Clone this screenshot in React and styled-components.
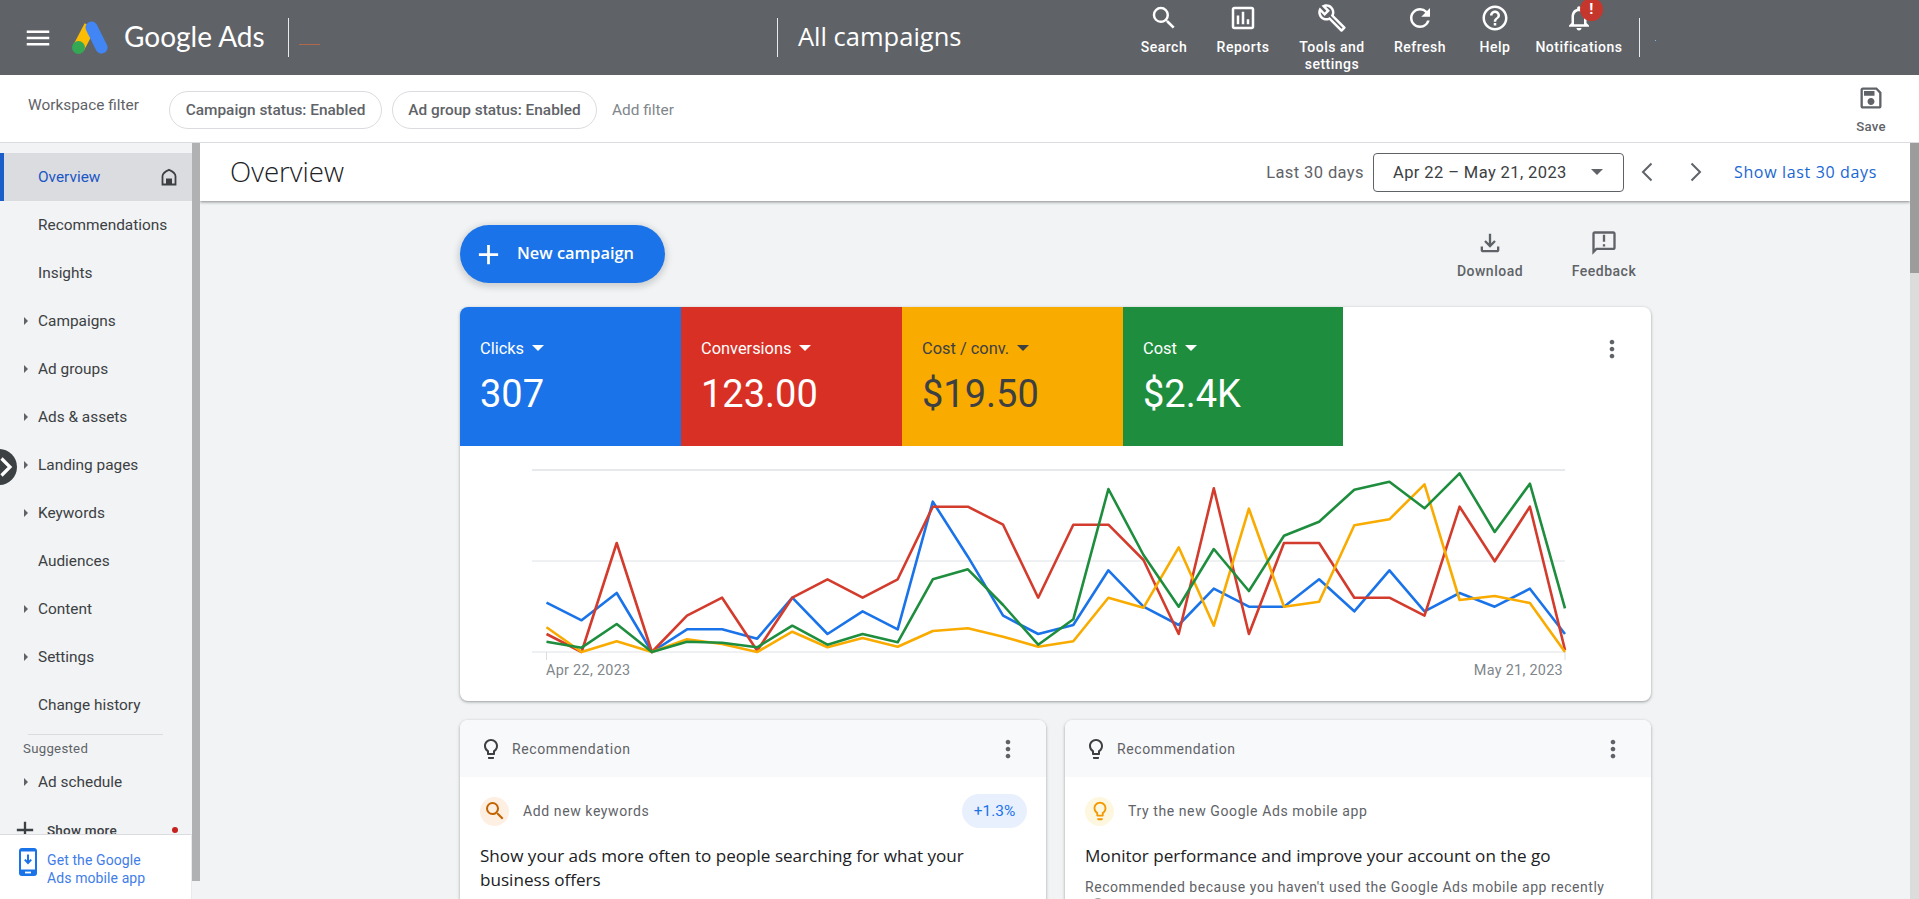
import React from 'react';
import styled, { createGlobalStyle } from 'styled-components';

const GlobalStyle = createGlobalStyle`
  html, body {
    margin: 0;
    height: 100%;
    overflow: hidden;
    background: #f1f3f4;
    font-family: Roboto, 'Liberation Sans', sans-serif;
  }
  * { box-sizing: border-box; }
`;

const DISPLAY = "'Open Sans', Roboto, sans-serif";

const ICONS = {
  menu: 'M3 18h18v-2H3v2zm0-5h18v-2H3v2zm0-7v2h18V6H3z',
  search: 'M15.5 14h-.79l-.28-.27A6.471 6.471 0 0 0 16 9.5 6.5 6.5 0 1 0 9.5 16c1.61 0 3.09-.59 4.23-1.57l.27.28v.79l5 4.99L20.49 19l-4.99-5zm-6 0C7.01 14 5 11.99 5 9.5S7.01 5 9.5 5 14 7.01 14 9.5 11.99 14 9.5 14z',
  reports: 'M19 3H5c-1.1 0-2 .9-2 2v14c0 1.1.9 2 2 2h14c1.1 0 2-.9 2-2V5c0-1.1-.9-2-2-2zm0 16H5V5h14v14zM7 10h2v7H7zm4-3h2v10h-2zm4 6h2v4h-2z',
  tools: 'M22.61 18.99l-9.08-9.08c.93-2.34.45-5.1-1.44-7C9.79.61 6.21.4 3.66 2.25L7.5 6.1 6.08 7.5 2.25 3.69C.39 6.23.6 9.82 2.9 12.11c1.86 1.86 4.57 2.35 6.89 1.48l9.11 9.11c.39.39 1.02.39 1.41 0l2.3-2.3c.4-.38.4-1.01 0-1.41zm-3 1.6l-9.46-9.46c-.61.45-1.29.72-2 .82-1.36.2-2.79-.21-3.83-1.25C3.37 9.76 2.93 8.5 3 7.26l3.09 3.09 4.24-4.24-3.09-3.09c1.24-.07 2.49.37 3.44 1.31 1.08 1.08 1.49 2.57 1.24 3.96-.12.71-.42 1.37-.88 1.96l9.45 9.45-.88.89z',
  refresh: 'M17.65 6.35A7.958 7.958 0 0 0 12 4c-4.42 0-7.99 3.58-7.99 8s3.57 8 7.99 8c3.73 0 6.84-2.55 7.73-6h-2.08A5.99 5.99 0 0 1 12 18c-3.31 0-6-2.69-6-6s2.69-6 6-6c1.66 0 3.14.69 4.22 1.78L13 11h7V4l-2.35 2.35z',
  help: 'M11 18h2v-2h-2v2zm1-16C6.48 2 2 6.48 2 12s4.48 10 10 10 10-4.48 10-10S17.52 2 12 2zm0 18c-4.41 0-8-3.59-8-8s3.59-8 8-8 8 3.59 8 8-3.59 8-8 8zm0-14c-2.21 0-4 1.79-4 4h2c0-1.1.9-2 2-2s2 .9 2 2c0 2-3 1.75-3 5h2c0-2.25 3-2.5 3-5 0-2.21-1.79-4-4-4z',
  bell: 'M12 22c1.1 0 2-.9 2-2h-4c0 1.1.9 2 2 2zm6-6v-5c0-3.07-1.63-5.64-4.5-6.32V4c0-.83-.67-1.5-1.5-1.5s-1.5.67-1.5 1.5v.68C7.64 5.36 6 7.92 6 11v5l-2 2v1h16v-1l-2-2zm-2 1H8v-6c0-2.48 1.51-4.5 4-4.5s4 2.02 4 4.5v6z',
  save: 'M17 3H5c-1.11 0-2 .9-2 2v14c0 1.1.89 2 2 2h14c1.1 0 2-.9 2-2V7l-4-4zm2 16H5V5h11.17L19 7.83V19zm-7-7c-1.66 0-3 1.34-3 3s1.34 3 3 3 3-1.34 3-3-1.34-3-3-3zM6 6h9v4H6z',
  download: 'M18 15v3H6v-3H4v3c0 1.1.9 2 2 2h12c1.1 0 2-.9 2-2v-3h-2zm-1-4l-1.41-1.41L13 12.17V4h-2v8.17L8.41 9.59 7 11l5 5 5-5z',
  feedback: 'M20 2H4c-1.1 0-2 .9-2 2v18l4-4h14c1.1 0 2-.9 2-2V4c0-1.1-.9-2-2-2zm0 14H5.17L4 17.17V4h16v12zM11 5h2v6h-2zm0 8h2v2h-2z',
  bulb: 'M9 21c0 .55.45 1 1 1h4c.55 0 1-.45 1-1v-1H9v1zm3-19C8.14 2 5 5.14 5 9c0 2.38 1.19 4.47 3 5.74V17c0 .55.45 1 1 1h6c.55 0 1-.45 1-1v-2.26c1.81-1.27 3-3.36 3-5.74 0-3.86-3.14-7-7-7zm2.85 11.1l-.85.6V16h-4v-2.3l-.85-.6A4.997 4.997 0 0 1 7 9c0-2.76 2.24-5 5-5s5 2.24 5 5c0 1.63-.8 3.16-2.15 4.1z',
  more: 'M12 8c1.1 0 2-.9 2-2s-.9-2-2-2-2 .9-2 2 .9 2 2 2zm0 2c-1.1 0-2 .9-2 2s.9 2 2 2 2-.9 2-2-.9-2-2-2zm0 6c-1.1 0-2 .9-2 2s.9 2 2 2 2-.9 2-2-.9-2-2-2z',
  plus: 'M19 13h-6v6h-2v-6H5v-2h6V5h2v6h6v2z',
  left: 'M15.5 3.5L7 12l8.5 8.5',
  right: 'M8.5 3.5L17 12l-8.5 8.5',
};

const Icon = ({ name, size = 24, color = 'currentColor', line = 0 }) => (
  <svg width={size} height={size} viewBox="0 0 24 24" style={{ display: 'block', flex: 'none' }}>
    {line ? (
      <path d={ICONS[name]} fill="none" stroke={color} strokeWidth={line} />
    ) : (
      <path d={ICONS[name]} fill={color} />
    )}
  </svg>
);

const Page = styled.div`
  height: 899px;
  display: flex;
  flex-direction: column;
  overflow: hidden;
`;

/* top bar */
const TopBar = styled.header`
  height: 75px;
  flex: none;
  background: #5f6368;
  color: #fff;
  display: flex;
  align-items: center;
`;
const MenuButton = styled.div`
  width: 30px;
  margin-left: 23px;
  color: #fff;
`;
const Logo = styled.svg`
  margin-left: 19px;
  flex: none;
`;
const Wordmark = styled.div`
  margin: -3px 0 0 16px;
  width: 164px;
  font-family: Lato, sans-serif;
  font-size: 28px;
`;
const Rule = styled.div`
  width: 1px;
  height: 39px;
  margin: -1px 0 0 ${(p) => p.$ml || 0}px;
  background: #e8eaed;
  flex: none;
`;
const AccountDash = styled.div`
  width: 21px;
  height: 1px;
  margin: 13px 0 0 10px;
  background: #b0694d;
  flex: none;
`;
const ScopeTitle = styled.div`
  margin: -1px 0 0 457px;
  padding-left: 20px;
  height: 39px;
  width: 348px;
  border-left: 1px solid #e8eaed;
  font-family: ${DISPLAY};
  font-size: 25.5px;
  line-height: 36px;
  white-space: nowrap;
`;
const TopActions = styled.div`
  display: flex;
  align-items: flex-start;
  height: 75px;
`;
const TopAction = styled.div`
  width: ${(p) => p.$w}px;
  display: flex;
  flex-direction: column;
  align-items: center;
  padding-top: 3px;
  position: relative;
  font-size: 14px;
  font-weight: 500;
  letter-spacing: 0.5px;
  line-height: 17px;
  text-align: center;
`;
const TopLabel = styled.div`
  margin-top: 6px;
  white-space: nowrap;
`;
const Badge = styled.div`
  position: absolute;
  top: -2px;
  left: 49px;
  width: 23px;
  height: 23px;
  border-radius: 50%;
  background: #c5372c;
  font-size: 15px;
  font-weight: 700;
  line-height: 22px;
  color: #fff;
`;
const TinyDot = styled.div`
  width: 1px;
  height: 1px;
  margin: 6px 0 0 15px;
  background: #8ab4f8;
`;

/* filter bar */
const FilterBar = styled.div`
  height: 68px;
  flex: none;
  background: #fff;
  border-bottom: 1px solid #dadce0;
  display: flex;
  align-items: center;
  padding: 0 0 0 28px;
`;
const FilterLabel = styled.div`
  width: 141px;
  margin-top: -8px;
  font-size: 15.4px;
  color: #5f6368;
`;
const Chip = styled.div`
  height: 38px;
  width: ${(p) => p.$w}px;
  margin: 2px 10px 0 0;
  border: 1px solid #dadce0;
  border-radius: 19px;
  display: flex;
  align-items: center;
  justify-content: center;
  font-size: 15.4px;
  font-weight: 500;
  color: #5f6368;
  white-space: nowrap;
`;
const AddFilter = styled.div`
  margin: 2px 0 0 5px;
  font-size: 15.4px;
  color: #80868b;
`;
const SaveButton = styled.div`
  margin-left: auto;
  width: 96px;
  display: flex;
  flex-direction: column;
  align-items: center;
  color: #5f6368;
  font-size: 13.2px;
  font-weight: 500;
  letter-spacing: 0.3px;
  gap: 7px;
`;

/* body */
const Body = styled.div`
  flex: 1;
  min-height: 0;
  display: flex;
`;
const Sidebar = styled.aside`
  width: 192px;
  flex: none;
  display: flex;
  flex-direction: column;
  position: relative;
`;
const NavList = styled.nav`
  flex: 1;
  min-height: 0;
  overflow: hidden;
  padding-top: 10px;
  background: #f1f3f4;
`;
const NavRow = styled.div`
  height: 48px;
  display: flex;
  align-items: center;
  padding-left: 24px;
  padding-right: 14px;
  font-size: 15.4px;
  color: ${(p) => (p.$active ? '#1a56c4' : '#3c4043')};
  background: ${(p) => (p.$active ? '#dadce0' : 'transparent')};
  box-shadow: ${(p) => (p.$active ? 'inset 4px 0 0 #1a5fc9' : 'none')};
  white-space: nowrap;
`;
const Caret = styled.span`
  width: 14px;
  flex: none;
  &::before {
    content: '';
    display: ${(p) => (p.$show ? 'block' : 'none')};
    width: 0;
    height: 0;
    border-left: 4px solid #5f6368;
    border-top: 4px solid transparent;
    border-bottom: 4px solid transparent;
  }
`;
const HomeMark = styled.svg`
  margin-left: auto;
`;
const NavDivider = styled.div`
  height: 1px;
  margin: 5px 29px 0 28px;
  background: #dadce0;
`;
const NavHeading = styled.div`
  height: 23px;
  padding-left: 23px;
  line-height: 27px;
  font-size: 13.2px;
  letter-spacing: 0.3px;
  color: #5f6368;
`;
const ShowMore = styled.div`
  height: 48px;
  display: flex;
  align-items: center;
  padding-left: 11px;
  font-size: 13.5px;
  font-weight: 500;
  color: #3c4043;
  letter-spacing: 0.2px;
`;
const ShowMoreLabel = styled.span`
  margin-left: 8px;
`;
const RedDot = styled.span`
  width: 6px;
  height: 6px;
  margin-left: 55px;
  border-radius: 50%;
  background: #c5221f;
`;
const MobileLink = styled.div`
  height: 65px;
  flex: none;
  background: #fff;
  border-top: 1px solid #dadce0;
  border-right: 1px solid #e8eaed;
  display: flex;
  padding: 16px 0 0 19px;
  gap: 10px;
  font-size: 14px;
  line-height: 18px;
  letter-spacing: 0.1px;
  color: #3f7de8;
`;
const CollapseButton = styled.div`
  position: absolute;
  left: -19px;
  top: 306px;
  width: 36px;
  height: 36px;
  border-radius: 50%;
  background: #3c4043;
  color: #fff;
  display: flex;
  align-items: center;
  justify-content: flex-end;
`;
const SideScroll = styled.div`
  width: 8px;
  flex: none;
  height: 738px;
  background: #b0b1b3;
`;
const Main = styled.main`
  flex: 1;
  min-width: 0;
  display: flex;
  flex-direction: column;
  overflow: hidden;
`;
const TitleBar = styled.div`
  height: 58px;
  flex: none;
  background: #fff;
  box-shadow: 0 1px 3px rgba(60, 64, 67, 0.6);
  display: flex;
  align-items: center;
  padding-left: 30px;
  position: relative;
`;
const PageTitle = styled.h1`
  margin: -2px 0 0;
  font-family: ${DISPLAY};
  font-size: 27.7px;
  font-weight: 300;
  color: #202124;
`;
const DateControls = styled.div`
  margin-left: auto;
  display: flex;
  align-items: center;
  padding-right: 33px;
  font-size: 16.5px;
  letter-spacing: 0.4px;
  color: #5f6368;
`;
const DateBox = styled.div`
  width: 251px;
  height: 39px;
  margin: 0 12px 0 9px;
  padding: 0 20px 0 19px;
  border: 1px solid #5f6368;
  border-radius: 4px;
  display: flex;
  align-items: center;
  justify-content: space-between;
  color: #3c4043;
  white-space: nowrap;
`;
const DownCaret = styled.span`
  width: 0;
  height: 0;
  border-left: ${(p) => p.$s || 6}px solid transparent;
  border-right: ${(p) => p.$s || 6}px solid transparent;
  border-top: ${(p) => p.$s || 6}px solid ${(p) => p.$c || '#5f6368'};
`;
const ArrowButton = styled.div`
  width: 24px;
  margin-right: ${(p) => p.$gap}px;
  color: #5f6368;
`;
const ShowLast = styled.div`
  font-family: ${DISPLAY};
  font-weight: 500;
  font-size: 16px;
  letter-spacing: 0.65px;
  color: #1967d2;
  white-space: nowrap;
`;
const Scroller = styled.div`
  flex: 1;
  min-height: 0;
  overflow: hidden;
`;
const Column = styled.div`
  width: 1191px;
  margin-left: 260px;
`;
const ActionRow = styled.div`
  height: 106px;
  padding-top: 24px;
  display: flex;
  align-items: flex-start;
`;
const NewCampaign = styled.div`
  width: 205px;
  height: 58px;
  border-radius: 29px;
  background: #1a73e8;
  color: #fff;
  display: flex;
  align-items: center;
  padding-left: 12px;
  gap: 12px;
  font-family: ${DISPLAY};
  font-size: 16.4px;
  font-weight: 600;
  box-shadow: 0 2px 6px 2px rgba(60, 64, 67, 0.2);
  span {
    margin-top: -4px;
  }
`;
const ToolButton = styled.div`
  width: ${(p) => p.$w}px;
  margin-left: ${(p) => p.$ml || 0}px;
  display: flex;
  flex-direction: column;
  align-items: center;
  gap: 6px;
  padding-top: 4px;
  font-size: 14px;
  font-weight: 500;
  letter-spacing: 0.5px;
  color: #5f6368;
`;
const Card = styled.section`
  background: #fff;
  border-radius: 8px;
  overflow: hidden;
  box-shadow: 0 1px 2px rgba(60, 64, 67, 0.3), 0 1px 3px 1px rgba(60, 64, 67, 0.15);
`;
const TileRow = styled.div`
  display: flex;
  height: 139px;
`;
const Tile = styled.div`
  width: ${(p) => p.$w}px;
  padding: 31px 0 0 20px;
  background: ${(p) => p.$bg};
  color: ${(p) => p.$fg};
`;
const TileLabel = styled.div`
  display: flex;
  align-items: center;
  gap: 8px;
  height: 20px;
  font-size: 16.4px;
`;
const TileValue = styled.div`
  margin-top: 10px;
  font-size: 38px;
  line-height: 52px;
`;
const CardMenu = styled.div`
  margin-left: auto;
  padding: ${(p) => p.$top}px ${(p) => p.$right}px 0 0;
  color: #5f6368;
`;
const DateAxis = styled.div`
  display: flex;
  justify-content: space-between;
  height: 39px;
  padding: 0 88px 0 86px;
  font-size: 14.4px;
  letter-spacing: 0.3px;
  color: #80868b;
`;
const RecGrid = styled.div`
  display: grid;
  grid-template-columns: 586px 586px;
  gap: 19px;
  margin-top: 19px;
`;
const RecHead = styled.div`
  height: 57px;
  display: flex;
  align-items: center;
  padding-left: 19px;
  gap: 9px;
  background: #f8f9fa;
  font-size: 14px;
  letter-spacing: 0.6px;
  color: #5f6368;
`;
const RecBulb = styled.div`
  color: #3c4043;
`;
const RecBody = styled.div`
  min-height: 300px;
  padding: 17px 20px 0;
`;
const RecTop = styled.div`
  display: flex;
  align-items: center;
  height: 34px;
  font-size: 14px;
  letter-spacing: 0.6px;
  color: #5f6368;
  gap: 14px;
`;
const RecBadge = styled.div`
  width: 29px;
  height: 29px;
  border-radius: 50%;
  flex: none;
  background: ${(p) => p.$bg};
  display: flex;
  align-items: center;
  justify-content: center;
`;
const Uplift = styled.div`
  margin-left: auto;
  margin-right: -1px;
  width: 65px;
  height: 34px;
  border-radius: 17px;
  background: #e8f0fe;
  color: #1a73e8;
  font-size: 15.4px;
  letter-spacing: 0;
  display: flex;
  align-items: center;
  justify-content: center;
`;
const RecTitle = styled.div`
  margin-top: 16px;
  font-family: ${DISPLAY};
  font-size: 17.1px;
  line-height: 24px;
  color: #202124;
`;
const RecNote = styled.div`
  margin-top: 9px;
  font-size: 14px;
  line-height: 20px;
  letter-spacing: 0.55px;
  color: #5f6368;
  white-space: nowrap;
`;
const NoteMark = styled.div`
  width: 12px;
  height: 12px;
  margin: 1px 0 0 7px;
  border-radius: 50%;
  background: #9aa0a6;
`;
const PageScroll = styled.div`
  width: 9px;
  flex: none;
  background: #dcdcdc;
`;
const PageThumb = styled.div`
  height: 130px;
  background: #9c9c9c;
`;

const NAV = [
  ['Recommendations'],
  ['Insights'],
  ['Campaigns', true],
  ['Ad groups', true],
  ['Ads & assets', true],
  ['Landing pages', true],
  ['Keywords', true],
  ['Audiences'],
  ['Content', true],
  ['Settings', true],
  ['Change history'],
];

const ACTIONS = [
  { icon: 'search', label: 'Search', w: 78 },
  { icon: 'reports', label: 'Reports', w: 80 },
  { icon: 'tools', label: ['Tools and', 'settings'], w: 98 },
  { icon: 'refresh', label: 'Refresh', w: 78 },
  { icon: 'help', label: 'Help', w: 72 },
  { icon: 'bell', label: 'Notifications', w: 96, badge: true },
];

const TILES = [
  { label: 'Clicks', value: '307', bg: '#1a73e8', fg: '#fff', w: 221 },
  { label: 'Conversions', value: '123.00', bg: '#d93025', fg: '#fff', w: 221 },
  { label: 'Cost / conv.', value: '$19.50', bg: '#f9ab00', fg: '#3c4043', w: 221 },
  { label: 'Cost', value: '$2.4K', bg: '#1e8e3e', fg: '#fff', w: 220 },
];

/* y positions read off the reference, x is daily */
const SERIES = [
  ['#1a73e8', [488, 541, 459, 636, 568, 568, 596, 473, 582, 514, 568, 185, 350, 527, 582, 555, 391, 500, 555, 446, 500, 500, 418, 514, 391, 514, 459, 500, 446, 582]],
  ['#d33b2c', [582, 636, 309, 636, 527, 473, 632, 473, 418, 473, 418, 200, 200, 254, 473, 254, 254, 360, 582, 145, 582, 309, 309, 473, 473, 527, 200, 364, 200, 630]],
  ['#f9ab00', [562, 636, 604, 636, 598, 612, 636, 575, 622, 594, 620, 573, 565, 590, 620, 604, 473, 503, 322, 557, 206, 500, 485, 256, 238, 133, 480, 468, 489, 636]],
  ['#1e8e3e', [605, 623, 552, 636, 605, 608, 622, 557, 614, 582, 607, 418, 388, 495, 614, 538, 147, 345, 500, 327, 453, 287, 245, 149, 125, 205, 100, 276, 131, 505]],
];

const toPoints = (vals) =>
  vals.map((v, i) => `${(86.5 + i * 35.12).toFixed(1)},${(v / 3 - 6).toFixed(1)}`).join(' ');

const Chart = () => (
  <svg width="1191" height="216" viewBox="0 0 1191 216" style={{ display: 'block' }}>
    {[24, 115, 206].map((y) => (
      <line key={y} x1="72" x2="1105" y1={y} y2={y} stroke="#e0e2e5" strokeWidth={y === 24 ? 1.5 : 1} />
    ))}
    <line x1="86.5" x2="86.5" y1="206" y2="214" stroke="#dadce0" />
    <line x1="1105" x2="1105" y1="206" y2="214" stroke="#dadce0" />
    {SERIES.map(([color, vals]) => (
      <polyline key={color} points={toPoints(vals)} fill="none" stroke={color} strokeWidth="2.6" strokeLinejoin="round" />
    ))}
  </svg>
);

const App = () => (
  <Page>
    <GlobalStyle />
    <TopBar>
      <MenuButton>
        <Icon name="menu" size={30} />
      </MenuButton>
      <Logo width="36" height="33" viewBox="0 0 36 33">
        <line x1="18" y1="5" x2="6.5" y2="27" stroke="#fbbc04" strokeWidth="12" />
        <line x1="19.5" y1="6.5" x2="29.5" y2="26.5" stroke="#4285f4" strokeWidth="12" strokeLinecap="round" />
        <circle cx="6.5" cy="26.5" r="6.5" fill="#34a853" />
      </Logo>
      <Wordmark>Google Ads</Wordmark>
      <Rule />
      <AccountDash />
      <ScopeTitle>All campaigns</ScopeTitle>
      <TopActions>
        {ACTIONS.map((a) => (
          <TopAction key={a.icon} $w={a.w}>
            <Icon name={a.icon} size={30} color="#fff" />
            <TopLabel>
              {Array.isArray(a.label) ? a.label.map((l) => <div key={l}>{l}</div>) : a.label}
            </TopLabel>
            {a.badge && <Badge>!</Badge>}
          </TopAction>
        ))}
      </TopActions>
      <Rule $ml={12} />
      <TinyDot />
    </TopBar>

    <FilterBar>
      <FilterLabel>Workspace filter</FilterLabel>
      <Chip $w={213}>Campaign status: Enabled</Chip>
      <Chip $w={205}>Ad group status: Enabled</Chip>
      <AddFilter>Add filter</AddFilter>
      <SaveButton>
        <Icon name="save" size={28} />
        Save
      </SaveButton>
    </FilterBar>

    <Body>
      <Sidebar>
        <NavList>
          <NavRow $active>
            <Caret />
            Overview
            <HomeMark width="18" height="18" viewBox="0 0 18 18">
              <path d="M2.5 16.5V8.2C2.5 6 5 3.5 9 1.8c4 1.7 6.5 4.2 6.5 6.4v8.3z" fill="none" stroke="#3c4043" strokeWidth="1.8" />
              <rect x="6" y="10.5" width="6" height="6" fill="#3c4043" />
            </HomeMark>
          </NavRow>
          {NAV.map(([label, caret]) => (
            <NavRow key={label}>
              <Caret $show={caret} />
              {label}
            </NavRow>
          ))}
          <NavDivider />
          <NavHeading>Suggested</NavHeading>
          <NavRow>
            <Caret $show />
            Ad schedule
          </NavRow>
          <ShowMore>
            <Icon name="plus" size={28} color="#3c4043" />
            <ShowMoreLabel>Show more</ShowMoreLabel>
            <RedDot />
          </ShowMore>
        </NavList>
        <MobileLink>
          <svg width="18" height="28" viewBox="0 0 18 28" style={{ flex: 'none', marginTop: -3 }}>
            <rect width="18" height="28" rx="3" fill="#1a73e8" />
            <rect x="2" y="3.5" width="14" height="18" fill="#fff" />
            <path d="M9 6.5v8M5.8 11.6 9 15l3.2-3.4" fill="none" stroke="#1a73e8" strokeWidth="2" />
            <rect x="6" y="23.6" width="6" height="1.8" fill="#fff" />
          </svg>
          <div>
            Get the Google
            <br />
            Ads mobile app
          </div>
        </MobileLink>
        <CollapseButton>
          <Icon name="right" size={24} color="#fff" line={3.2} />
        </CollapseButton>
      </Sidebar>
      <SideScroll />

      <Main>
        <TitleBar>
          <PageTitle>Overview</PageTitle>
          <DateControls>
            Last 30 days
            <DateBox>
              Apr 22 – May 21, 2023
              <DownCaret />
            </DateBox>
            <ArrowButton $gap={23}>
              <Icon name="left" color="#5f6368" line={2} />
            </ArrowButton>
            <ArrowButton $gap={27}>
              <Icon name="right" color="#5f6368" line={2} />
            </ArrowButton>
            <ShowLast>Show last 30 days</ShowLast>
          </DateControls>
        </TitleBar>
        <Scroller>
          <Column>
            <ActionRow>
              <NewCampaign>
                <Icon name="plus" size={33} color="#fff" />
                <span>New campaign</span>
              </NewCampaign>
              <ToolButton $w={90} $ml={780}>
                <Icon name="download" size={28} />
                Download
              </ToolButton>
              <ToolButton $w={90} $ml={24}>
                <Icon name="feedback" size={28} />
                Feedback
              </ToolButton>
            </ActionRow>

            <Card>
              <TileRow>
                {TILES.map((t) => (
                  <Tile key={t.label} $bg={t.bg} $fg={t.fg} $w={t.w}>
                    <TileLabel>
                      {t.label}
                      <DownCaret $s={6} $c={t.fg} />
                    </TileLabel>
                    <TileValue>{t.value}</TileValue>
                  </Tile>
                ))}
                <CardMenu $top={28} $right={25}>
                  <Icon name="more" size={28} />
                </CardMenu>
              </TileRow>
              <Chart />
              <DateAxis>
                <span>Apr 22, 2023</span>
                <span>May 21, 2023</span>
              </DateAxis>
            </Card>

            <RecGrid>
              <Card>
                <RecHead>
                  <RecBulb>
                    <Icon name="bulb" />
                  </RecBulb>
                  Recommendation
                  <CardMenu $top={0} $right={24}>
                    <Icon name="more" size={28} />
                  </CardMenu>
                </RecHead>
                <RecBody>
                  <RecTop>
                    <RecBadge $bg="#feefe3">
                      <Icon name="search" size={24} color="#c26401" />
                    </RecBadge>
                    Add new keywords
                    <Uplift>+1.3%</Uplift>
                  </RecTop>
                  <RecTitle>Show your ads more often to people searching for what your business offers</RecTitle>
                </RecBody>
              </Card>
              <Card>
                <RecHead>
                  <RecBulb>
                    <Icon name="bulb" />
                  </RecBulb>
                  Recommendation
                  <CardMenu $top={0} $right={24}>
                    <Icon name="more" size={28} />
                  </CardMenu>
                </RecHead>
                <RecBody>
                  <RecTop>
                    <RecBadge $bg="#fef7e0">
                      <Icon name="bulb" size={22} color="#f29900" />
                    </RecBadge>
                    Try the new Google Ads mobile app
                  </RecTop>
                  <RecTitle>Monitor performance and improve your account on the go</RecTitle>
                  <RecNote>Recommended because you haven't used the Google Ads mobile app recently</RecNote>
                  <NoteMark />
                </RecBody>
              </Card>
            </RecGrid>
          </Column>
        </Scroller>
      </Main>
      <PageScroll>
        <PageThumb />
      </PageScroll>
    </Body>
  </Page>
);

export default App;
